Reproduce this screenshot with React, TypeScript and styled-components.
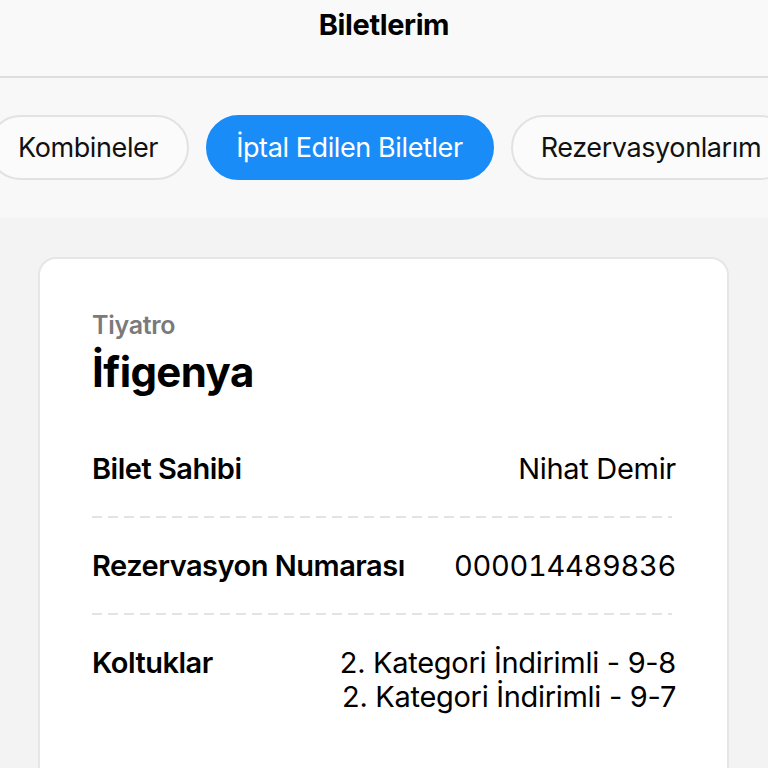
import { Fragment } from "react";
import styled, { createGlobalStyle } from "styled-components";

const GlobalStyle = createGlobalStyle`
    html, body {
        margin: 0;
        padding: 0;
        background: #f3f3f3;
        font-family: Inter, "Noto Sans", sans-serif;
        -webkit-font-smoothing: antialiased;
    }
`

const tabs = ["Kombineler", "İptal Edilen Biletler", "Rezervasyonlarım"];
const activeTab = "İptal Edilen Biletler";

const rows = [
    { label: "Bilet Sahibi", values: ["Nihat Demir"] },
    { label: "Rezervasyon Numarası", values: ["000014489836"], numeric: true },
    { label: "Koltuklar", values: ["2. Kategori İndirimli - 9-8", "2. Kategori İndirimli - 9-7"] },
];

export default function App() {
    return (
        <Page>
            <GlobalStyle />
            <Header>
                <h1>Biletlerim</h1>
            </Header>
            <TabBar>
                {tabs.map((t) => (
                    <Tab key={t} $active={t === activeTab}>{t}</Tab>
                ))}
            </TabBar>
            <Content>
                <Card>
                    <Category>Tiyatro</Category>
                    <EventName>İfigenya</EventName>
                    <Rows>
                        {rows.map((r, i) => (
                            <Fragment key={r.label}>
                                <Row>
                                    <Label>{r.label}</Label>
                                    <Values $numeric={!!r.numeric}>
                                        {r.values.map((v) => <span key={v}>{v}</span>)}
                                    </Values>
                                </Row>
                                {i < rows.length - 1 && <Divider />}
                            </Fragment>
                        ))}
                    </Rows>
                </Card>
            </Content>
        </Page>
    )
}

const Page = styled.div`
    width: 768px;
    height: 768px;
    overflow: hidden;
    display: flex;
    flex-direction: column;
    background: #f3f3f3;
`

const Header = styled.header`
    height: 76px;
    flex-shrink: 0;
    background: #f9f9f9;
    border-bottom: 2px solid #dedede;
    display: flex;
    justify-content: center;

    h1 {
        margin: 7px 0 0;
        font-size: 29px;
        font-weight: 700;
        letter-spacing: -0.4px;
        color: #000;
        line-height: 36px;
    }
`

const TabBar = styled.nav`
    display: flex;
    gap: 17px;
    padding: 37px 0 38px;
    margin-left: -12px;
    background: #f8f8f8;
    white-space: nowrap;
    flex-shrink: 0;
`

const Tab = styled.div<{ $active: boolean }>`
    flex-shrink: 0;
    height: 65px;
    box-sizing: border-box;
    padding: 0 29px 0 28px;
    border-radius: 33px;
    display: flex;
    align-items: center;
    font-size: 27px;
    letter-spacing: -0.4px;
    color: ${(p) => (p.$active ? "#ffffff" : "#111111")};
    background: ${(p) => (p.$active ? "#1a8cf8" : "#fbfbfb")};
    border: 2px solid ${(p) => (p.$active ? "#1a8cf8" : "#e2e2e2")};
`

const Content = styled.main`
    flex: 1;
    padding: 39px 39px 0 38px;
    background: #f3f3f3;
`

const Card = styled.section`
    background: #ffffff;
    border: 2px solid #e6e6e6;
    border-radius: 18px;
    padding: 51px 51px 40px 52px;
    height: 600px;
    box-sizing: border-box;
`

const Category = styled.div`
    font-size: 25px;
    font-weight: 600;
    color: #7a7a7a;
    letter-spacing: -0.3px;
    line-height: 30px;
`

const EventName = styled.div`
    font-size: 42px;
    font-weight: 700;
    color: #000;
    letter-spacing: -0.6px;
    line-height: 50px;
    margin-top: 7px;
`

const Rows = styled.div`
    margin-top: 24px;
    display: flex;
    flex-direction: column;
`

const Row = styled.div`
    display: flex;
    justify-content: space-between;
    align-items: flex-start;
    padding: 31px 0 30px;
`

const Divider = styled.div`
    height: 2px;
    margin-right: 4px;
    background-image: repeating-linear-gradient(to right, #e3e3e3 0 10px, transparent 10px 16px);
`

const Label = styled.div`
    font-size: 29px;
    font-weight: 600;
    color: #000;
    letter-spacing: -0.5px;
    line-height: 34px;
`

const Values = styled.div<{ $numeric: boolean }>`
    display: flex;
    flex-direction: column;
    align-items: flex-end;
    font-size: 29px;
    color: #000;
    letter-spacing: -0.3px;
    line-height: 34px;
    font-variant-numeric: ${(p) => (p.$numeric ? "tabular-nums" : "normal")};
`
